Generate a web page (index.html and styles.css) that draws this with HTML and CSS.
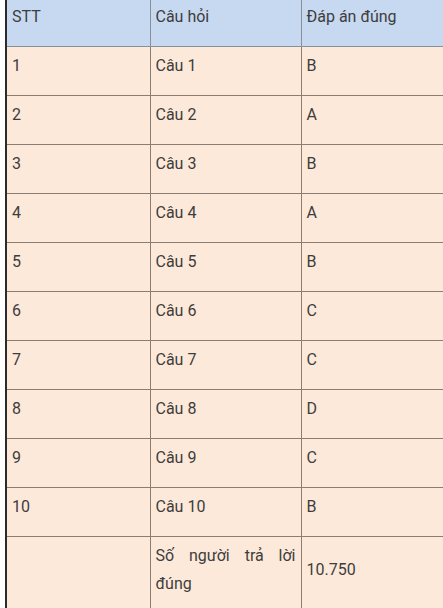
FILE: index.html
```html
<!DOCTYPE html>
<html lang="vi">
<head>
<meta charset="utf-8">
<link rel="stylesheet" href="styles.css">
</head>
<body>
<div class="frame">
<table class="answers">
  <colgroup>
    <col class="c1"><col class="c2"><col class="c3">
  </colgroup>
  <thead>
    <tr class="head"><td>STT</td><td>Câu hỏi</td><td>Đáp án đúng</td></tr>
  </thead>
  <tbody>
    <tr><td>1</td><td>Câu 1</td><td>B</td></tr>
    <tr><td>2</td><td>Câu 2</td><td>A</td></tr>
    <tr><td>3</td><td>Câu 3</td><td>B</td></tr>
    <tr><td>4</td><td>Câu 4</td><td>A</td></tr>
    <tr><td>5</td><td>Câu 5</td><td>B</td></tr>
    <tr><td>6</td><td>Câu 6</td><td>C</td></tr>
    <tr><td>7</td><td>Câu 7</td><td>C</td></tr>
    <tr><td>8</td><td>Câu 8</td><td>D</td></tr>
    <tr><td>9</td><td>Câu 9</td><td>C</td></tr>
    <tr><td>10</td><td>Câu 10</td><td>B</td></tr>
    <tr><td></td><td class="just">Số người trả lời đúng</td><td>10.750</td></tr>
  </tbody>
</table>
</div>
</body>
</html>
```
FILE: styles.css
```css
html, body {
  margin: 0;
  padding: 0;
  background: #ffffff;
}
body {
  font-family: Roboto, "Noto Sans", Arial, sans-serif;
  font-size: 16px;
  color: #3d3d3d;
}
.frame {
  width: 443px;
  height: 608px;
  overflow: hidden;
}
.answers {
  border-collapse: collapse;
  table-layout: fixed;
  width: 442px;
  margin: -3px 0 0 5px;
}
.c1 { width: 144px; }
.c2 { width: 151px; }
.c3 { width: 147px; }
.answers td {
  border: 1px solid #8a7e74;
  padding: 5px 5px 15px 5px;
  line-height: 28px;
  vertical-align: middle;
  background: #fde9d9;
  text-align: left;
}
.answers tr td:first-child {
  border-left: 2px solid #2b2b2b;
}
.answers .head td {
  background: #c6d9f1;
  border-color: #8a8f98;
}
.answers .head td:first-child {
  border-left: 2px solid #2b2b2b;
}
.answers td.just {
  text-align: justify;
}
```
